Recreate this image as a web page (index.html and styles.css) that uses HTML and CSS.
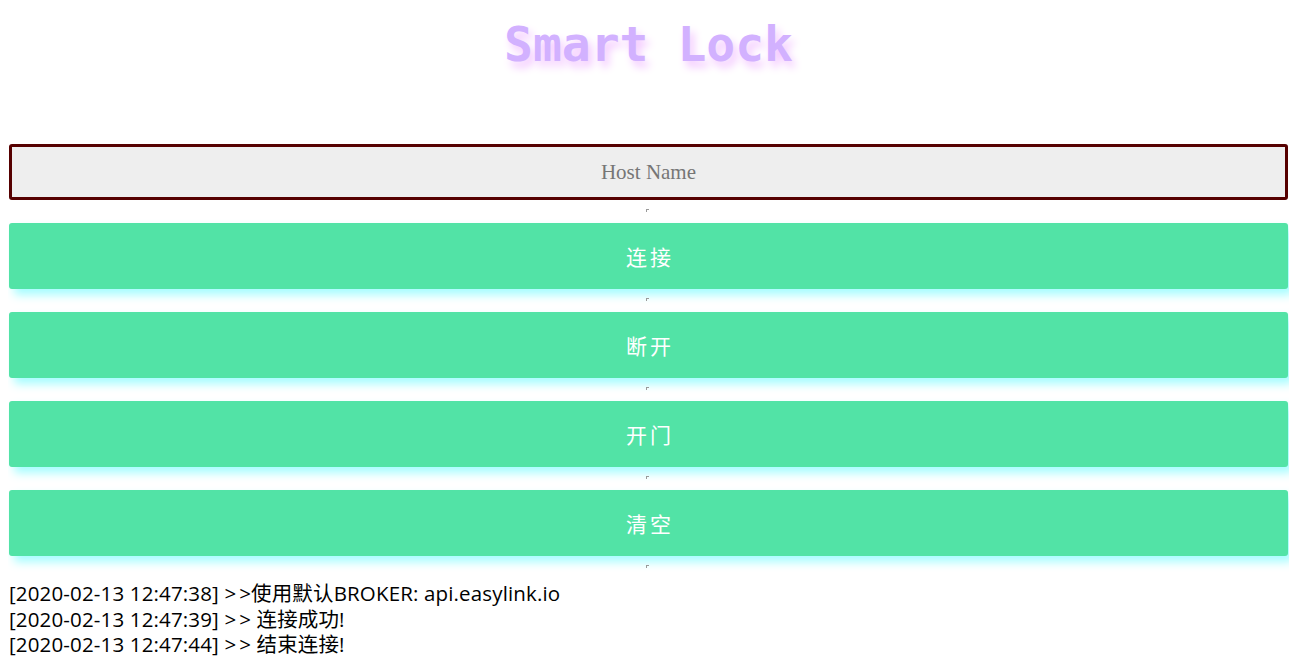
FILE: index.html
```html
<!DOCTYPE html>
<html lang="zh">
<head>
<meta charset="utf-8">
<title>Smart Lock</title>
<link rel="stylesheet" href="styles.css">
</head>
<body>
<h1 class="title">Smart Lock</h1>
<div class="panel">
  <input class="host" type="text" placeholder="Host Name">
  <div class="sep"><span class="mark"></span></div>
  <button class="btn">连接</button>
  <div class="sep"><span class="mark"></span></div>
  <button class="btn">断开</button>
  <div class="sep"><span class="mark"></span></div>
  <button class="btn">开门</button>
  <div class="sep"><span class="mark"></span></div>
  <button class="btn">清空</button>
  <div class="sep"><span class="mark"></span></div>
</div>
<div class="log">
  <div>[2020-02-13 12:47:38] <span class="arr">&gt;</span>&gt;使用默认BROKER: api.easylink.io</div>
  <div>[2020-02-13 12:47:39] <span class="arr">&gt;</span>&gt; 连接成功!</div>
  <div>[2020-02-13 12:47:44] <span class="arr">&gt;</span>&gt; 结束连接!</div>
</div>
</body>
</html>
```

FILE: styles.css
```css
html, body {
  background: #ffffff;
}
body {
  margin: 8px;
}
.title {
  margin: 0;
  height: 136px;
  padding-top: 9px;
  box-sizing: border-box;
  text-align: center;
  font-family: "DejaVu Sans Mono", "Liberation Mono", monospace;
  font-weight: bold;
  font-size: 48px;
  line-height: 54px;
  color: #d2b1ff;
  text-shadow: 4px 6px 8px #f3c6ff;
}
.panel {
  display: flex;
  flex-direction: column;
  margin: 0 1px;
}
.host {
  display: block;
  box-sizing: border-box;
  width: 100%;
  height: 56px;
  margin: 0;
  border: 3px solid #560000;
  border-radius: 3px;
  background: #eeeeee;
  text-align: center;
  font-family: "Liberation Serif", "Times New Roman", serif;
  font-size: 21px;
  color: #555;
  outline: none;
}
.host::placeholder {
  color: #767676;
}
.sep {
  height: 23px;
  display: flex;
  justify-content: center;
  align-items: flex-start;
  padding-top: 9px;
  box-sizing: border-box;
}
.mark {
  display: block;
  width: 2px;
  height: 2px;
  border-top: 1px solid #9a9a9a;
  border-left: 1px solid #9a9a9a;
  margin-left: -2px;
}
.btn {
  display: block;
  width: 100%;
  height: 66px;
  border: none;
  border-radius: 3px;
  background: #52e3a6;
  color: #ffffff;
  font-family: "Noto Sans CJK SC", "Noto Sans", sans-serif;
  font-size: 21px;
  letter-spacing: 3px;
  text-indent: 3px;
  box-shadow: 5px 6px 10px #a6fdff;
  cursor: pointer;
}
.log {
  margin: 0 1px;
  padding-top: 2px;
  font-family: "Open Sans", "Noto Sans CJK SC", sans-serif;
  font-size: 20.5px;
  letter-spacing: 0.15px;
  line-height: 25.5px;
  color: #000;
}
.arr {
  letter-spacing: 3px;
}
```
